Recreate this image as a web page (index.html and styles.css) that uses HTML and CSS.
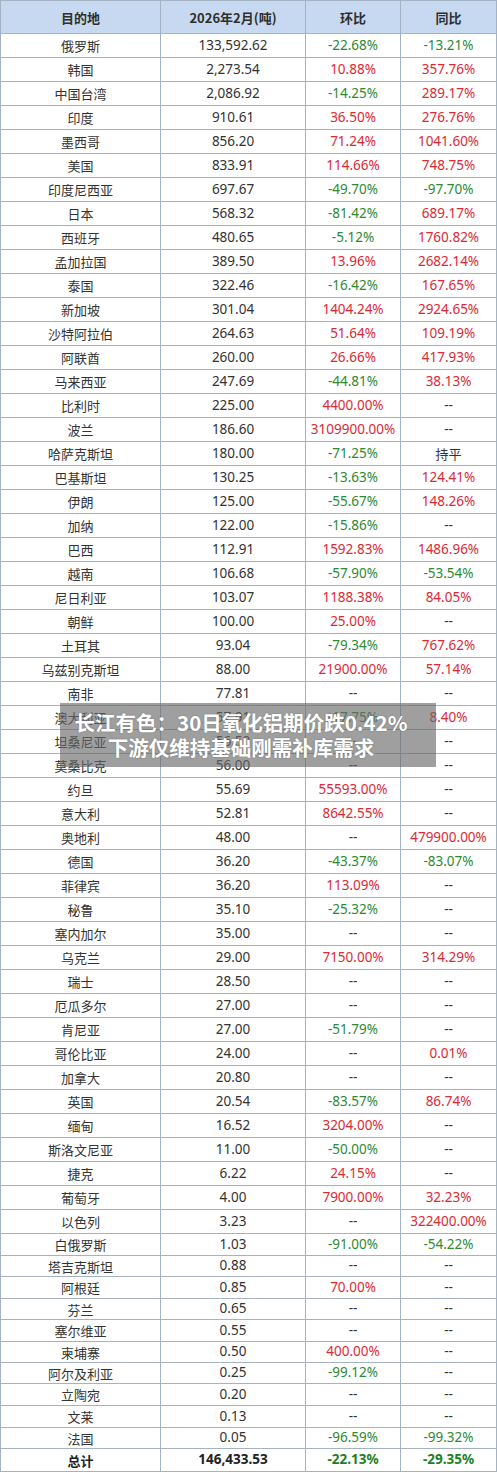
FILE: index.html
```html
<!DOCTYPE html>
<html lang="zh-CN">
<head>
<meta charset="utf-8">
<title>氧化铝出口目的地</title>
<link rel="stylesheet" href="styles.css">
</head>
<body>
<div class="page">
<div class="tbl">
<div class="c h">目的地</div><div class="c h">2026年2月(吨)</div><div class="c h">环比</div><div class="c h">同比</div>
<div class="c n">俄罗斯</div><div class="c v">133,592.62</div><div class="c v g">-22.68%</div><div class="c v g">-13.21%</div>
<div class="c n">韩国</div><div class="c v">2,273.54</div><div class="c v r">10.88%</div><div class="c v r">357.76%</div>
<div class="c n">中国台湾</div><div class="c v">2,086.92</div><div class="c v g">-14.25%</div><div class="c v r">289.17%</div>
<div class="c n">印度</div><div class="c v">910.61</div><div class="c v r">36.50%</div><div class="c v r">276.76%</div>
<div class="c n">墨西哥</div><div class="c v">856.20</div><div class="c v r">71.24%</div><div class="c v r">1041.60%</div>
<div class="c n">美国</div><div class="c v">833.91</div><div class="c v r">114.66%</div><div class="c v r">748.75%</div>
<div class="c n">印度尼西亚</div><div class="c v">697.67</div><div class="c v g">-49.70%</div><div class="c v g">-97.70%</div>
<div class="c n">日本</div><div class="c v">568.32</div><div class="c v g">-81.42%</div><div class="c v r">689.17%</div>
<div class="c n">西班牙</div><div class="c v">480.65</div><div class="c v g">-5.12%</div><div class="c v r">1760.82%</div>
<div class="c n">孟加拉国</div><div class="c v">389.50</div><div class="c v r">13.96%</div><div class="c v r">2682.14%</div>
<div class="c n">泰国</div><div class="c v">322.46</div><div class="c v g">-16.42%</div><div class="c v r">167.65%</div>
<div class="c n">新加坡</div><div class="c v">301.04</div><div class="c v r">1404.24%</div><div class="c v r">2924.65%</div>
<div class="c n">沙特阿拉伯</div><div class="c v">264.63</div><div class="c v r">51.64%</div><div class="c v r">109.19%</div>
<div class="c n">阿联酋</div><div class="c v">260.00</div><div class="c v r">26.66%</div><div class="c v r">417.93%</div>
<div class="c n">马来西亚</div><div class="c v">247.69</div><div class="c v g">-44.81%</div><div class="c v r">38.13%</div>
<div class="c n">比利时</div><div class="c v">225.00</div><div class="c v r">4400.00%</div><div class="c v">--</div>
<div class="c n">波兰</div><div class="c v">186.60</div><div class="c v r">3109900.00%</div><div class="c v">--</div>
<div class="c n">哈萨克斯坦</div><div class="c v">180.00</div><div class="c v g">-71.25%</div><div class="c n">持平</div>
<div class="c n">巴基斯坦</div><div class="c v">130.25</div><div class="c v g">-13.63%</div><div class="c v r">124.41%</div>
<div class="c n">伊朗</div><div class="c v">125.00</div><div class="c v g">-55.67%</div><div class="c v r">148.26%</div>
<div class="c n">加纳</div><div class="c v">122.00</div><div class="c v g">-15.86%</div><div class="c v">--</div>
<div class="c n">巴西</div><div class="c v">112.91</div><div class="c v r">1592.83%</div><div class="c v r">1486.96%</div>
<div class="c n">越南</div><div class="c v">106.68</div><div class="c v g">-57.90%</div><div class="c v g">-53.54%</div>
<div class="c n">尼日利亚</div><div class="c v">103.07</div><div class="c v r">1188.38%</div><div class="c v r">84.05%</div>
<div class="c n">朝鲜</div><div class="c v">100.00</div><div class="c v r">25.00%</div><div class="c v">--</div>
<div class="c n">土耳其</div><div class="c v">93.04</div><div class="c v g">-79.34%</div><div class="c v r">767.62%</div>
<div class="c n">乌兹别克斯坦</div><div class="c v">88.00</div><div class="c v r">21900.00%</div><div class="c v r">57.14%</div>
<div class="c n">南非</div><div class="c v">77.81</div><div class="c v">--</div><div class="c v">--</div>
<div class="c n">澳大利亚</div><div class="c v">57.91</div><div class="c v g">-17.75%</div><div class="c v r">8.40%</div>
<div class="c n">坦桑尼亚</div><div class="c v">56.50</div><div class="c v">--</div><div class="c v">--</div>
<div class="c n">莫桑比克</div><div class="c v">56.00</div><div class="c v">--</div><div class="c v">--</div>
<div class="c n">约旦</div><div class="c v">55.69</div><div class="c v r">55593.00%</div><div class="c v">--</div>
<div class="c n">意大利</div><div class="c v">52.81</div><div class="c v r">8642.55%</div><div class="c v">--</div>
<div class="c n">奥地利</div><div class="c v">48.00</div><div class="c v">--</div><div class="c v r">479900.00%</div>
<div class="c n">德国</div><div class="c v">36.20</div><div class="c v g">-43.37%</div><div class="c v g">-83.07%</div>
<div class="c n">菲律宾</div><div class="c v">36.20</div><div class="c v r">113.09%</div><div class="c v">--</div>
<div class="c n">秘鲁</div><div class="c v">35.10</div><div class="c v g">-25.32%</div><div class="c v">--</div>
<div class="c n">塞内加尔</div><div class="c v">35.00</div><div class="c v">--</div><div class="c v">--</div>
<div class="c n">乌克兰</div><div class="c v">29.00</div><div class="c v r">7150.00%</div><div class="c v r">314.29%</div>
<div class="c n">瑞士</div><div class="c v">28.50</div><div class="c v">--</div><div class="c v">--</div>
<div class="c n">厄瓜多尔</div><div class="c v">27.00</div><div class="c v">--</div><div class="c v">--</div>
<div class="c n">肯尼亚</div><div class="c v">27.00</div><div class="c v g">-51.79%</div><div class="c v">--</div>
<div class="c n">哥伦比亚</div><div class="c v">24.00</div><div class="c v">--</div><div class="c v r">0.01%</div>
<div class="c n">加拿大</div><div class="c v">20.80</div><div class="c v">--</div><div class="c v">--</div>
<div class="c n">英国</div><div class="c v">20.54</div><div class="c v g">-83.57%</div><div class="c v r">86.74%</div>
<div class="c n">缅甸</div><div class="c v">16.52</div><div class="c v r">3204.00%</div><div class="c v">--</div>
<div class="c n">斯洛文尼亚</div><div class="c v">11.00</div><div class="c v g">-50.00%</div><div class="c v">--</div>
<div class="c n">捷克</div><div class="c v">6.22</div><div class="c v r">24.15%</div><div class="c v">--</div>
<div class="c n">葡萄牙</div><div class="c v">4.00</div><div class="c v r">7900.00%</div><div class="c v r">32.23%</div>
<div class="c n">以色列</div><div class="c v">3.23</div><div class="c v">--</div><div class="c v r">322400.00%</div>
<div class="c n">白俄罗斯</div><div class="c v">1.03</div><div class="c v g">-91.00%</div><div class="c v g">-54.22%</div>
<div class="c n">塔吉克斯坦</div><div class="c v">0.88</div><div class="c v">--</div><div class="c v">--</div>
<div class="c n">阿根廷</div><div class="c v">0.85</div><div class="c v r">70.00%</div><div class="c v">--</div>
<div class="c n">芬兰</div><div class="c v">0.65</div><div class="c v">--</div><div class="c v">--</div>
<div class="c n">塞尔维亚</div><div class="c v">0.55</div><div class="c v">--</div><div class="c v">--</div>
<div class="c n">柬埔寨</div><div class="c v">0.50</div><div class="c v r">400.00%</div><div class="c v">--</div>
<div class="c n">阿尔及利亚</div><div class="c v">0.25</div><div class="c v g">-99.12%</div><div class="c v">--</div>
<div class="c n">立陶宛</div><div class="c v">0.20</div><div class="c v">--</div><div class="c v">--</div>
<div class="c n">文莱</div><div class="c v">0.13</div><div class="c v">--</div><div class="c v">--</div>
<div class="c n">法国</div><div class="c v">0.05</div><div class="c v g">-96.59%</div><div class="c v g">-99.32%</div>
<div class="c n t">总计</div><div class="c v t">146,433.53</div><div class="c v g t">-22.13%</div><div class="c v g t">-29.35%</div>
</div>
<div class="banner">
<div class="banner-line">长江有色：30日氧化铝期价跌0.42%</div>
<div class="banner-line">下游仅维持基础刚需补库需求</div>
</div>
</div>
</body>
</html>
```
FILE: styles.css
```css
html, body {
  margin: 0;
  padding: 0;
  background: #ffffff;
}

.page {
  position: relative;
  width: 497px;
  height: 1472px;
  overflow: hidden;
  font-family: "Noto Sans", "Noto Sans CJK SC", sans-serif;
  color: #333333;
}

.tbl {
  display: grid;
  grid-template-columns: 160px 145px 95px 96px;
  grid-template-rows: 33px repeat(50, 24px) 22px 21px 22px 21px 22px 21px 21px 22px 22px 21px 23px;
  border-top: 1px solid #a3b3c4;
  border-left: 1px solid #a3b3c4;
  width: 497px;
  box-sizing: border-box;
}

.c {
  box-sizing: border-box;
  border-right: 1px solid #a3b3c4;
  border-bottom: 1px solid #a3b3c4;
  display: flex;
  align-items: center;
  justify-content: center;
  white-space: nowrap;
  line-height: 1;
}

.h {
  background: #c6d9f0;
  font-family: "Noto Sans CJK SC", "Noto Sans", sans-serif;
  font-weight: 700;
  font-size: 13px;
  color: #2f2f2f;
}

.n {
  font-family: "Noto Sans CJK SC", sans-serif;
  font-size: 13px;
  color: #333333;
}

.v {
  font-size: 13.5px;
  color: #333333;
}

.r {
  color: #dc2a35;
}

.g {
  color: #2e8a2e;
}

.t {
  font-weight: 700;
  color: #222222;
}

.g.t {
  color: #1f7f1f;
}

.banner {
  position: absolute;
  left: 60px;
  top: 703px;
  width: 376px;
  height: 64px;
  box-sizing: border-box;
  padding-right: 14px;
  background: rgba(105, 105, 105, 0.64);
  display: flex;
  flex-direction: column;
  justify-content: center;
  align-items: center;
  font-family: "Noto Sans CJK SC", sans-serif;
  font-weight: 700;
  font-size: 20.5px;
  line-height: 25px;
  color: #ffffff;
  text-shadow: 0 0 2px rgba(0, 0, 0, 0.25);
  white-space: nowrap;
}
```
